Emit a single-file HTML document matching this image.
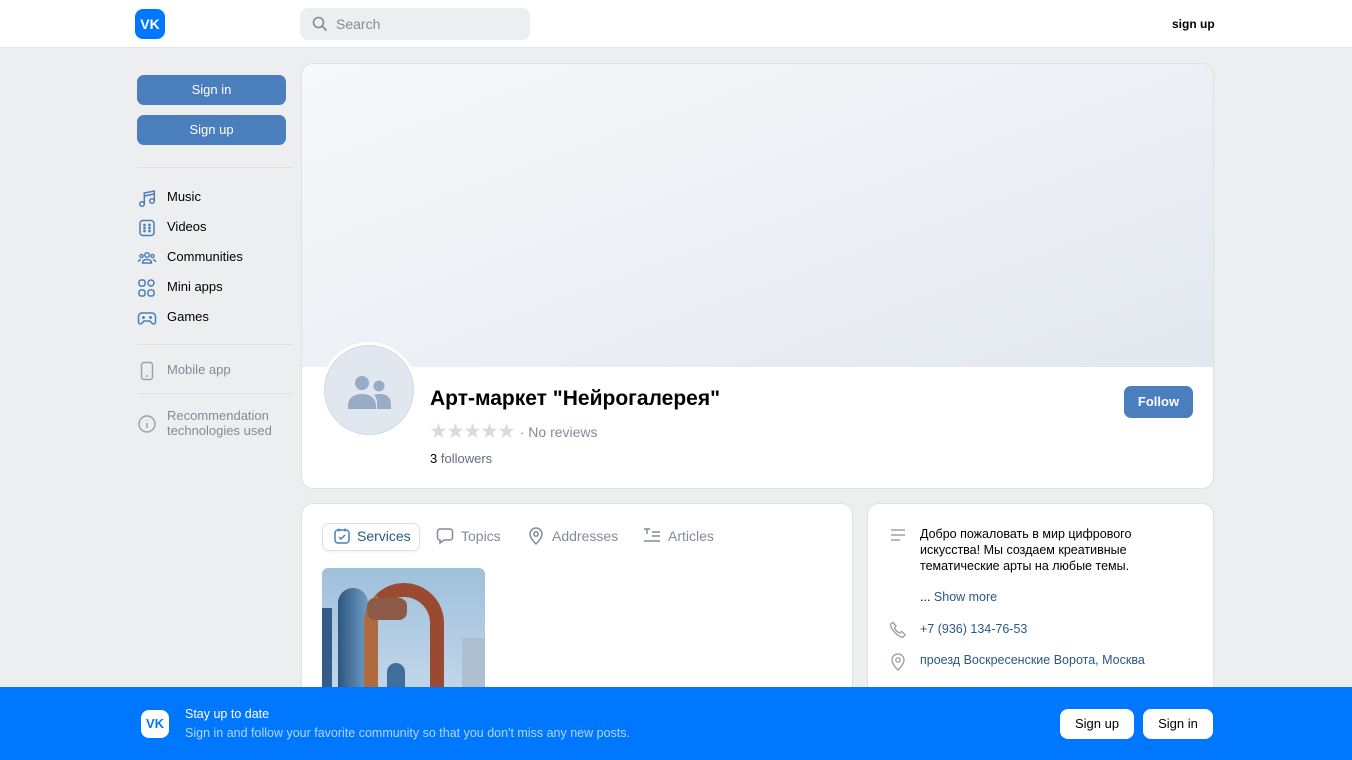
<!DOCTYPE html>
<html><head><meta charset="utf-8"><style>
*{box-sizing:border-box;margin:0;padding:0}
body{width:1352px;height:760px;overflow:hidden;background:#edeef0;font-family:"Liberation Sans","Noto Sans CJK SC",sans-serif;font-size:13px;color:#000;position:relative}
.hdr{position:absolute;top:0;left:0;width:1352px;height:48px;background:#fff;border-bottom:1px solid #e3e4e8}
.logo{position:absolute;width:30px;height:30px;border-radius:8px;background:#0077ff;color:#fff;font-weight:bold;font-size:14px;text-align:center;line-height:30px}
.search{position:absolute;left:300px;top:8px;width:230px;height:32px;background:#edeef0;border-radius:8px;color:#818c99;font-size:14px;line-height:32px;padding-left:36px}
.btn{position:absolute;left:137px;width:149px;height:30px;background:#4a7ebc;color:#fff;border-radius:7px;text-align:center;line-height:30px;font-size:13px}
.nav{position:absolute;left:137px;font-size:13px;height:20px;line-height:20px}
.nav svg{position:absolute;left:0;top:1px}
.nav span{position:absolute;left:30px;white-space:nowrap}
.sep{position:absolute;left:137px;width:156px;height:1px;background:#dce1e6}
.card{position:absolute;background:#fff;border-radius:12px;border:1px solid #dce1e6;overflow:hidden}
.grey{color:#818c99}
.bottom{position:absolute;left:0;top:687px;width:1352px;height:73px;background:#0077ff}
.wbtn{position:absolute;top:22px;height:30px;background:#fff;border-radius:8px;color:#000;line-height:30px;text-align:center;font-size:13px}
</style></head><body>
<div class="hdr">
<div class="logo" style="left:135px;top:9px">VK</div>
<div class="search"><svg style="position:absolute;left:12px;top:8px" width="16" height="16" viewBox="0 0 16 16"><circle cx="6.5" cy="6.5" r="5" fill="none" stroke="#818c99" stroke-width="1.6"/><path d="M10 10l4.5 4.5" stroke="#818c99" stroke-width="1.6"/></svg>Search</div>
<div style="position:absolute;left:1172px;top:17px;font-weight:bold;font-size:12px">sign up</div>
</div>
<div class="btn" style="top:75px">Sign in</div>
<div class="btn" style="top:115px">Sign up</div>
<div class="sep" style="top:167px"></div>
<div class="nav" style="top:187px"><svg width="20" height="20" viewBox="0 0 20 20" fill="none" stroke="#4a7ebc" stroke-width="1.5"><circle cx="5" cy="16" r="2.3"/><circle cx="15" cy="13" r="2.3"/><path d="M7.3 16V5l10-2v10M7.3 8l10-2"/></svg><span>Music</span></div>
<div class="nav" style="top:217px"><svg width="20" height="20" viewBox="0 0 20 20" fill="none" stroke="#4a7ebc" stroke-width="1.5"><rect x="3" y="2.5" width="14" height="15" rx="3"/><circle cx="7.5" cy="7" r=".6"/><circle cx="12.5" cy="7" r=".6"/><circle cx="7.5" cy="10" r=".6"/><circle cx="12.5" cy="10" r=".6"/><circle cx="7.5" cy="13" r=".6"/><circle cx="12.5" cy="13" r=".6"/></svg><span>Videos</span></div>
<div class="nav" style="top:247px"><svg width="20" height="20" viewBox="0 0 20 20" fill="none" stroke="#4a7ebc" stroke-width="1.4"><circle cx="10" cy="7" r="2.3"/><circle cx="4.5" cy="8" r="1.6"/><circle cx="15.5" cy="8" r="1.6"/><path d="M5.5 15c0-2.5 2-3.5 4.5-3.5s4.5 1 4.5 3.5zM1.5 14c0-1.5 1-2.3 2.5-2.3M18.5 14c0-1.5-1-2.3-2.5-2.3"/></svg><span>Communities</span></div>
<div class="nav" style="top:277px"><svg width="20" height="20" viewBox="0 0 20 20" fill="none" stroke="#4a7ebc" stroke-width="1.5"><rect x="2" y="2" width="6" height="6" rx="2"/><circle cx="14" cy="5" r="3"/><rect x="2" y="12" width="6" height="6" rx="2"/><rect x="11" y="12" width="6" height="6" rx="2"/></svg><span>Mini apps</span></div>
<div class="nav" style="top:307px"><svg width="20" height="20" viewBox="0 0 20 20" fill="none" stroke="#4a7ebc" stroke-width="1.5"><path d="M5 5h10a3.5 3.5 0 013.5 3.5V14a2 2 0 01-3.5 1.3L13 13H7l-2 2.3A2 2 0 011.5 14V8.5A3.5 3.5 0 015 5zM6.5 8v3M5 9.5h3"/><circle cx="13.5" cy="9.5" r=".7"/></svg><span>Games</span></div>
<div class="sep" style="top:344px"></div>
<div class="nav grey" style="top:360px"><svg width="20" height="20" viewBox="0 0 20 20" fill="none" stroke="#99a2ad" stroke-width="1.5"><rect x="4.5" y="1.5" width="11" height="17" rx="2.5"/><path d="M9 15h2"/></svg><span>Mobile app</span></div>
<div class="sep" style="top:393px"></div>
<div class="nav grey" style="top:408px;line-height:15px"><svg style="top:6px" width="20" height="20" viewBox="0 0 20 20" fill="none" stroke="#99a2ad" stroke-width="1.5"><circle cx="10" cy="10" r="8"/><path d="M10 9v5M10 6v.5"/></svg><span>Recommendation<br>technologies used</span></div>

<div class="card" style="left:301px;top:63px;width:913px;height:426px">
<div style="height:303px;background:linear-gradient(160deg,#f7f8fa,#e3e8ef)"></div>
<div style="position:absolute;left:19px;top:278px;width:96px;height:96px;border-radius:50%;background:#fff;padding:3px"><div style="width:90px;height:90px;border-radius:50%;background:#e1e7ef;border:1px solid #d3dae3;position:relative"><svg style="position:absolute;left:23px;top:30px" width="46" height="34" viewBox="0 0 46 34" fill="#99acc5"><circle cx="14" cy="7" r="7"/><circle cx="31" cy="10" r="5.5"/><path d="M0 30c0-8 6-12 14-12s14 4 14 12v3H0zM29 33v-5c0-4-1-7-3-9 3-1 5-1 6-1 7 0 11 4 11 10v5z"/></svg></div></div>
<div style="position:absolute;left:128px;top:323px;font-size:21px;font-weight:bold">Арт-маркет "Нейрогалерея"</div>
<div style="position:absolute;left:128px;top:353px;font-size:17px;color:#d7dbe0;letter-spacing:0">★★★★★ <span class="grey" style="font-size:14px">· No reviews</span></div>
<div style="position:absolute;left:128px;top:387px;color:#626d7a"><b style="font-weight:normal;color:#000">3</b> followers</div>
<div style="position:absolute;left:822px;top:322px;width:69px;height:32px;background:#4a7ebc;color:#fff;border-radius:7px;text-align:center;line-height:32px;font-weight:bold">Follow</div>
</div>

<div class="card" style="left:301px;top:503px;width:552px;height:200px">
<div style="position:absolute;left:20px;top:19px;width:98px;height:28px;border:1px solid #dce1e6;border-radius:7px;box-shadow:0 1px 2px rgba(0,0,0,.06)"></div>
<svg style="position:absolute;left:31px;top:23px" width="18" height="18" viewBox="0 0 18 18" fill="none" stroke="#4a7ebc" stroke-width="1.5"><rect x="2" y="3" width="14" height="13" rx="3"/><path d="M6 1.5v3M12 1.5v3M6 10l2 2 4-4"/></svg>
<div style="position:absolute;left:55px;top:24px;font-size:14px;color:#2a5885">Services</div>
<svg style="position:absolute;left:134px;top:23px" width="18" height="18" viewBox="0 0 18 18" fill="none" stroke="#818c99" stroke-width="1.5"><path d="M4 2h10a2.5 2.5 0 012.5 2.5v6A2.5 2.5 0 0114 13H8l-4 3v-3A2.5 2.5 0 011.5 10.5v-6A2.5 2.5 0 014 2z"/></svg>
<div style="position:absolute;left:159px;top:24px;font-size:14px;color:#818c99">Topics</div>
<svg style="position:absolute;left:225px;top:23px" width="18" height="18" viewBox="0 0 18 18" fill="none" stroke="#818c99" stroke-width="1.5"><path d="M9 17s-6-5.5-6-10a6 6 0 0112 0c0 4.5-6 10-6 10z"/><circle cx="9" cy="7" r="2.2"/></svg>
<div style="position:absolute;left:250px;top:24px;font-size:14px;color:#818c99">Addresses</div>
<svg style="position:absolute;left:341px;top:23px" width="18" height="18" viewBox="0 0 18 18" fill="none" stroke="#818c99" stroke-width="1.4"><path d="M1 2h6M4 2v5M9 5h8M9 9h8M1 14h16"/></svg>
<div style="position:absolute;left:366px;top:24px;font-size:14px;color:#818c99">Articles</div>
<div style="position:absolute;left:20px;top:64px;width:163px;height:140px;border-radius:6px;overflow:hidden;background:linear-gradient(180deg,#9fc0dc,#c7d9ea)">
<div style="position:absolute;left:16px;top:20px;width:30px;height:130px;border-radius:15px 15px 0 0;background:linear-gradient(90deg,#2d5680,#6f9cc6)"></div>
<div style="position:absolute;left:0;top:40px;width:10px;height:100px;background:#335d88"></div>
<div style="position:absolute;left:65px;top:95px;width:18px;height:60px;border-radius:9px 9px 0 0;background:#3f6e9c"></div>
<div style="position:absolute;left:140px;top:70px;width:23px;height:80px;background:#aebfd0"></div>
<div style="position:absolute;left:42px;top:15px;width:80px;height:130px;border-radius:40px 40px 0 30px;border:14px solid #9a4a30;border-left-color:#b06a40;border-bottom:none"></div>
<div style="position:absolute;left:45px;top:30px;width:40px;height:22px;border-radius:8px;background:#8d5a45"></div>
</div>
</div>

<div class="card" style="left:867px;top:503px;width:347px;height:200px">
<svg style="position:absolute;left:22px;top:24px" width="16" height="14" viewBox="0 0 16 14" stroke="#99a2ad" stroke-width="1.5"><path d="M1 2h14M1 7h14M1 12h9"/></svg>
<div style="position:absolute;left:52px;top:22px;line-height:16px;width:260px;font-size:12.5px">Добро пожаловать в мир цифрового искусства! Мы создаем креативные тематические арты на любые темы.</div>
<div style="position:absolute;left:52px;top:86px;font-size:12.5px">... <span style="color:#2a5885">Show more</span></div>
<svg style="position:absolute;left:21px;top:117px" width="18" height="18" viewBox="0 0 18 18" fill="none" stroke="#99a2ad" stroke-width="1.4"><path d="M4 1.5l3 3.5-1.5 2c1 2 3 4 5 5l2-1.5 3.5 3-1.5 2.5C10 17 1 8 1.5 3z"/></svg>
<div style="position:absolute;left:52px;top:118px;font-size:12.5px;color:#2a5885">+7 (936) 134-76-53</div>
<svg style="position:absolute;left:21px;top:149px" width="18" height="18" viewBox="0 0 18 18" fill="none" stroke="#99a2ad" stroke-width="1.4"><path d="M9 17s-6-5.5-6-10a6 6 0 0112 0c0 4.5-6 10-6 10z"/><circle cx="9" cy="7" r="2.2"/></svg>
<div style="position:absolute;left:52px;top:149px;font-size:12.5px;color:#2a5885">проезд Воскресенские Ворота, Москва</div>
</div>

<div class="bottom">
<div class="logo" style="left:141px;top:23px;width:28px;height:28px;line-height:28px;background:#fff;color:#0077ff;font-size:13px">VK</div>
<div style="position:absolute;left:185px;top:20px;color:#fff;font-size:12.5px">Stay up to date</div>
<div style="position:absolute;left:185px;top:39px;color:#b3d4ff;font-size:12.5px">Sign in and follow your favorite community so that you don't miss any new posts.</div>
<div class="wbtn" style="left:1060px;width:74px">Sign up</div>
<div class="wbtn" style="left:1143px;width:70px">Sign in</div>
</div>
</body></html>
